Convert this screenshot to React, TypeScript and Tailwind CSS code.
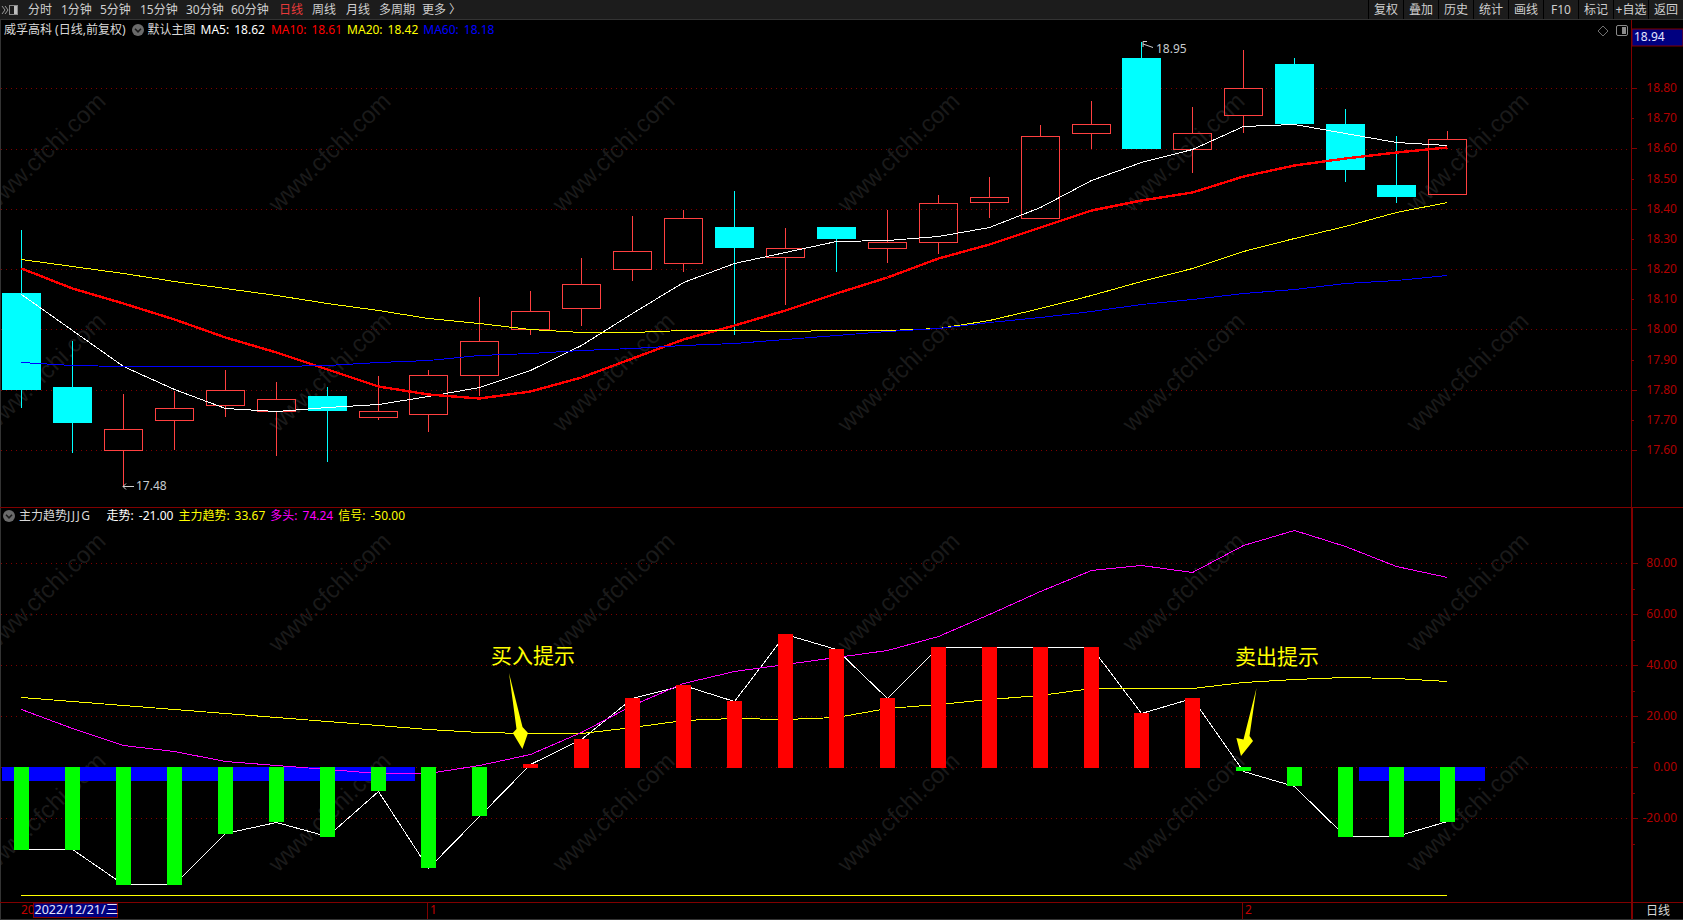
const periods: [string, string][] = [
  ["分时", "w-[33px]"],
  ["1分钟", "w-[39px]"],
  ["5分钟", "w-[40px]"],
  ["15分钟", "w-[46px]"],
  ["30分钟", "w-[45px]"],
  ["60分钟", "w-[48px]"],
  ["日线", "w-[33px]"],
  ["周线", "w-[34px]"],
  ["月线", "w-[33px]"],
  ["多周期", "w-[43px]"],
  ["更多 〉", "w-[40px]"],
];
const tools = ["复权", "叠加", "历史", "统计", "画线", "F10", "标记", "+自选", "返回"];

const cx = (i: number) => Math.round(21 + 50.93 * i) + 0.5;

// wick top, body top, body bottom, wick bottom, cyan = falling day
const candles: [number, number, number, number, boolean][] = [
  [230, 293, 390, 408, true],
  [341, 387, 423, 453, true],
  [394, 429, 451, 486, false],
  [391, 408, 421, 450, false],
  [370, 390, 406, 417, false],
  [382, 399, 412, 456, false],
  [387, 396, 411, 462, true],
  [376, 411, 418, 420, false],
  [370, 375, 415, 432, false],
  [297, 341, 376, 396, false],
  [291, 311, 330, 335, false],
  [258, 284, 309, 326, false],
  [216, 251, 270, 281, false],
  [210, 218, 264, 272, false],
  [191, 227, 248, 335, true],
  [228, 248, 258, 305, false],
  [227, 227, 239, 272, true],
  [210, 242, 249, 263, false],
  [195, 203, 243, 254, false],
  [177, 197, 203, 218, false],
  [125, 136, 219, 219, false],
  [101, 124, 134, 149, false],
  [42, 58, 149, 149, true],
  [107, 133, 150, 173, false],
  [50, 88, 116, 133, false],
  [58, 64, 124, 124, true],
  [109, 124, 170, 182, true],
  [136, 185, 197, 203, true],
  [131, 139, 195, 195, false],
];

const ma5 = [294, 330, 366, 389, 408, 411, 407, 404, 396, 387, 370, 345, 313, 282, 263, 252, 241, 240, 236, 227, 207, 180, 162, 149, 126, 124, 133, 142, 145];
const ma10 = [268, 288, 303, 319, 337, 352, 369, 386, 394, 398, 391, 377, 358, 339, 325, 310, 293, 277, 258, 244, 227, 210, 200, 192, 176, 165, 158, 152, 147];
const ma20 = [259, 266, 273, 281, 288, 295, 303, 310, 318, 323, 329, 332, 332, 330, 330, 331, 330, 330, 328, 320, 308, 295, 281, 268, 251, 238, 226, 212, 202];
const ma60 = [362, 365, 366, 366, 366, 366, 365, 362, 360, 355, 353, 350, 348, 345, 343, 339, 335, 331, 328, 322, 317, 311, 304, 299, 293, 289, 283, 280, 275];

// bar ends in the lower panel, zero line is y=767
const bars = [850, 850, 885, 885, 834, 822, 837, 791, 868, 816, 764, 739, 698, 685, 701, 634, 649, 698, 647, 647, 647, 647, 713, 698, 771, 786, 837, 837, 822];
const trend = [849, 849, 884, 884, 833, 822, 836, 791, 868, 816, 764, 739, 698, 685, 701, 634, 649, 698, 647, 647, 647, 647, 713, 698, 771, 786, 836, 836, 821];
const mainForce = [697, 701, 705, 709, 713, 717, 721, 725, 729, 732, 733, 733, 727, 720, 718, 719, 717, 708, 704, 699, 695, 688, 688, 688, 682, 679, 677, 678, 681];
const bulls = [709, 728, 745, 751, 761, 765, 769, 773, 773, 765, 754, 732, 705, 683, 671, 664, 657, 650, 636, 614, 591, 570, 565, 572, 545, 530, 546, 566, 577];

const pts = (ys: number[]) => ys.map((y, i) => `${cx(i)},${y + 0.5}`).join(" ");

const mainTicks = ["18.80", "18.70", "18.60", "18.50", "18.40", "18.30", "18.20", "18.10", "18.00", "17.90", "17.80", "17.70", "17.60"];
const subTicks: [string, number][] = [["80.00", 563], ["60.00", 614], ["40.00", 665], ["20.00", 716], ["0.00", 767], ["-20.00", 818]];
const mainGrid = [88, 149, 209, 269, 329, 390, 450];

const wmCols = [-7, 278, 562, 847, 1132, 1416];
const wmRows = [213, 433, 653, 873];

function Chevron() {
  return (
    <svg width="12" height="12" viewBox="0 0 12 12" className="shrink-0">
      <circle cx="6" cy="6" r="6" fill="#6a6a6a" />
      <path d="M3 4.8 L6 7.8 L9 4.8" fill="none" stroke="#1a1a1a" strokeWidth="1.6" />
    </svg>
  );
}

function Stat({ label, value, className }: { label: string; value: string; className: string }) {
  return (
    <span className={className}>
      {label}:<span className="ml-[5px]">{value}</span>
    </span>
  );
}

function Watermark() {
  return (
    <svg width="1683" height="920" viewBox="0 0 1683 920" className="absolute left-0 top-0">
      {wmRows.map((y) =>
        wmCols.map((x) => (
          <text
            key={`${x}-${y}`}
            x={x}
            y={y}
            fill="#1a1a1a"
            fontSize="24"
            fontFamily="Liberation Sans, sans-serif"
            transform={`rotate(-44 ${x} ${y})`}
          >
            www.cfchi.com
          </text>
        ))
      )}
    </svg>
  );
}

function MainChart() {
  return (
    <svg width="1630" height="487" viewBox="1 20 1630 487" className="absolute left-0 top-0">
      <g shapeRendering="crispEdges">
        {mainGrid.map((y) => (
          <line key={y} x1="1" x2="1631" y1={y + 0.5} y2={y + 0.5} stroke="#800000" strokeDasharray="1 4" />
        ))}
        {candles.map(([hi, top, bot, lo, down], i) => {
          const x = cx(i);
          const color = down ? "#00ffff" : "#ff4040";
          return (
            <g key={i}>
              {top > hi && <line x1={x} x2={x} y1={hi} y2={top} stroke={color} />}
              {lo > bot && <line x1={x} x2={x} y1={bot} y2={lo} stroke={color} />}
              {down ? (
                <rect x={x - 19.5} y={top} width="39" height={bot - top} fill={color} />
              ) : (
                <rect x={x - 19} y={top + 0.5} width="38" height={bot - top - 1} fill="none" stroke={color} />
              )}
            </g>
          );
        })}
        <polyline points={pts(ma5)} fill="none" stroke="#ffffff" strokeWidth="1" />
        <polyline points={pts(ma10)} fill="none" stroke="#ff0000" strokeWidth="2.4" />
        <polyline points={pts(ma20)} fill="none" stroke="#ffff00" strokeWidth="1" />
        <polyline points={pts(ma60)} fill="none" stroke="#0000ff" strokeWidth="1" />
      </g>
      <path d="M134 486.5 H123 M126 483.5 L123 486.5 L126 489.5" fill="none" stroke="#d0d0d0" />
      <text x="136" y="485" fill="#c8ccd0" fontSize="12" dominantBaseline="central">17.48</text>
      <path d="M1153 47.5 L1143 44 M1147 41.5 L1143 41.5 V47" fill="none" stroke="#d0d0d0" />
      <text x="1156" y="48.5" fill="#c8ccd0" fontSize="12" dominantBaseline="central">18.95</text>
      <path d="M1598 31 L1603 26 L1608 31 L1603 36 Z" fill="none" stroke="#707070" />
      <rect x="1616.5" y="25.5" width="11" height="10" rx="1.5" fill="none" stroke="#8a8a8a" />
      <rect x="1622" y="27" width="4" height="7" fill="#8a8a8a" />
    </svg>
  );
}

function SubChart() {
  return (
    <svg width="1630" height="394" viewBox="1 508 1630 394" className="absolute left-0 top-0">
      <g shapeRendering="crispEdges">
        {subTicks.map(([, y]) => (
          <line key={y} x1="1" x2="1631" y1={y + 0.5} y2={y + 0.5} stroke="#800000" strokeDasharray="1 4" />
        ))}
        <rect x="2" y="767" width="413" height="14" fill="#0000ff" />
        <rect x="1359" y="767" width="126" height="14" fill="#0000ff" />
        <polyline points={pts(trend)} fill="none" stroke="#ffffff" strokeWidth="1" />
        <polyline points={pts(mainForce)} fill="none" stroke="#ffff00" strokeWidth="1" />
        <polyline points={pts(bulls)} fill="none" stroke="#ff00ff" strokeWidth="1" />
        <line x1="21" x2="1447" y1="895.5" y2="895.5" stroke="#ffff00" />
        {bars.map((y, i) => (
          <rect
            key={i}
            x={cx(i) - 7.5}
            y={Math.min(y, 767)}
            width="15"
            height={Math.abs(y - 767) + (y < 767 ? 1 : 0)}
            fill={y < 767 ? "#ff0000" : "#00ff00"}
          />
        ))}
      </g>
      <polygon points="509,673 522.5,727 528,733 522.4,749 512.8,733 516.5,729" fill="#ffff00" />
      <polygon points="1256.5,688 1249.5,736 1253,741 1241,756 1236.4,738 1243.5,739.5" fill="#ffff00" />
      <text x="491" y="655" fill="#ffff00" fontSize="21" dominantBaseline="central">买入提示</text>
      <text x="1235" y="656" fill="#ffff00" fontSize="21" dominantBaseline="central">卖出提示</text>
    </svg>
  );
}

function MainAxis() {
  return (
    <svg width="51" height="487" viewBox="1632 20 51 487" className="block">
      <rect x="1632" y="29" width="51" height="17" fill="#000080" stroke="#800000" />
      <text x="1634" y="36" fill="#e4e4ff" fontSize="12" dominantBaseline="central">18.94</text>
      {mainTicks.map((label, i) => {
        const y = Math.round(88 + 30.17 * i);
        return (
          <g key={label}>
            <line x1="1632" x2={i % 2 ? 1634 : 1637} y1={y + 0.5} y2={y + 0.5} stroke="#800000" shapeRendering="crispEdges" />
            <text x="1677" y={y - 1} fill="#b00000" fontSize="12" textAnchor="end" dominantBaseline="central">{label}</text>
          </g>
        );
      })}
    </svg>
  );
}

function SubAxis() {
  return (
    <svg width="50" height="394" viewBox="1633 508 50 394" className="block">
      {subTicks.map(([label, y]) => (
        <g key={label}>
          <line x1="1633" x2="1638" y1={y + 0.5} y2={y + 0.5} stroke="#800000" shapeRendering="crispEdges" />
          <line x1="1633" x2="1635" y1={y + 26} y2={y + 26} stroke="#800000" shapeRendering="crispEdges" />
          <text x="1677" y={y - 1} fill="#b00000" fontSize="12" textAnchor="end" dominantBaseline="central">{label}</text>
        </g>
      ))}
    </svg>
  );
}

function DateAxis() {
  return (
    <svg width="1631" height="16" viewBox="1 903 1631 16" className="block">
      <text x="21" y="909" fill="#c00000" fontSize="12" dominantBaseline="central">20</text>
      <rect x="33.5" y="903" width="84" height="14.5" fill="#000080" stroke="#800000" />
      <text x="34.5" y="909.5" fill="#e4e4ff" fontSize="12.5" dominantBaseline="central">2022/12/21/三</text>
      <line x1="427.5" x2="427.5" y1="903" y2="919" stroke="#800000" shapeRendering="crispEdges" />
      <text x="430" y="909" fill="#c00000" fontSize="12" dominantBaseline="central">1</text>
      <line x1="1242.5" x2="1242.5" y1="903" y2="919" stroke="#800000" shapeRendering="crispEdges" />
      <text x="1245" y="909" fill="#c00000" fontSize="12" dominantBaseline="central">2</text>
    </svg>
  );
}

export default function App() {
  return (
    <div className="relative w-[1683px] h-[920px] bg-black overflow-hidden flex flex-col font-['Noto_Sans','Noto_Sans_CJK_SC',sans-serif] text-[12px] leading-none">
      <Watermark />

      {/* top toolbar */}
      <div className="relative h-[20px] shrink-0 flex items-center bg-[#1c1c1c] border-b border-[#333333] text-[#cfcfcf]">
        <svg width="18" height="14" viewBox="0 0 18 14" className="ml-[1px] shrink-0">
          <path d="M1 3 L4 7 L1 11 M4 3 L7 7 L4 11" fill="none" stroke="#9a9a9a" />
          <rect x="8.5" y="2.5" width="8" height="9" fill="none" stroke="#8a8a8a" />
          <rect x="13" y="3" width="3" height="8" fill="#bdbdbd" />
        </svg>
        <div className="ml-[9px] flex items-center whitespace-nowrap">
          {periods.map(([p, w]) => (
            <span key={p} className={`${w} ${p === "日线" ? "text-[#e83a3a]" : ""}`}>{p}</span>
          ))}
        </div>
        <div className="ml-auto flex h-full">
          {tools.map((t) => (
            <span key={t} className="w-[35px] flex items-center justify-center border-l border-black whitespace-nowrap">{t}</span>
          ))}
        </div>
      </div>

      {/* price panel */}
      <div className="relative h-[488px] shrink-0 flex border-b border-[#800000]">
        <div className="relative w-[1631px] border-l border-[#333333]">
          <MainChart />
          <div className="relative h-[20px] flex items-center pl-[3px] whitespace-nowrap text-[#d8d8d8]">
            <span>威孚高科 (日线,前复权)</span>
            <span className="ml-[6px]"><Chevron /></span>
            <span className="ml-[4px]">默认主图</span>
            <Stat label="MA5" value="18.62" className="ml-[5px] text-white" />
            <Stat label="MA10" value="18.61" className="ml-[6px] text-[#ff0000]" />
            <Stat label="MA20" value="18.42" className="ml-[5px] text-[#ffff00]" />
            <Stat label="MA60" value="18.18" className="ml-[5px] text-[#0000ff]" />
          </div>
        </div>
        <div className="border-l border-[#800000]">
          <MainAxis />
        </div>
      </div>

      {/* indicator panel */}
      <div className="relative h-[394px] shrink-0 flex">
        <div className="relative w-[1631px] border-l border-[#333333]">
          <SubChart />
          <div className="relative h-[16px] flex items-center pl-[2px] whitespace-nowrap">
            <Chevron />
            <span className="ml-[4px] text-[#d8d8d8]">主力趋势<span className="tracking-[1.5px]">JJJG</span></span>
            <Stat label="走势" value="-21.00" className="ml-[15px] text-white" />
            <Stat label="主力趋势" value="33.67" className="ml-[5px] text-[#ffff00]" />
            <Stat label="多头" value="74.24" className="ml-[5px] text-[#ff00ff]" />
            <Stat label="信号" value="-50.00" className="ml-[5px] text-[#ffff00]" />
          </div>
        </div>
        <div className="border-l-2 border-[#800000]">
          <SubAxis />
        </div>
      </div>

      {/* date row */}
      <div className="relative h-[18px] shrink-0 flex border-t border-b border-t-[#800000] border-b-[#333333] bg-black">
        <div className="w-[1631px] border-l border-[#333333]">
          <DateAxis />
        </div>
        <div className="flex-1 flex items-center justify-center border-l-2 border-[#800000] text-[#d8d8d8]">日线</div>
      </div>
    </div>
  );
}
